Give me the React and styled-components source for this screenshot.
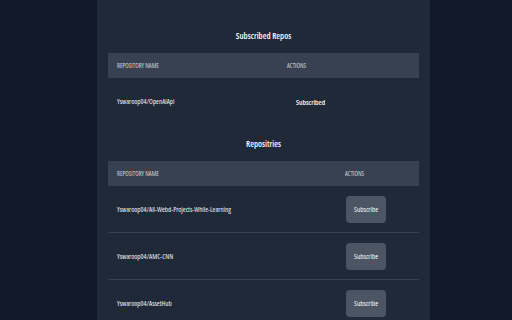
import React from "react";
import styled, { createGlobalStyle } from "styled-components";

const Global = createGlobalStyle`
  html, body { margin: 0; padding: 0; background: #111827; }
  body { font-family: "Open Sans", "Liberation Sans", Arial, sans-serif; font-stretch: 75%; }
`;

const Page = styled.div`
  height: 320px;
  overflow: hidden;
  display: flex;
  padding-left: 97px;
`;

const Panel = styled.main`
  width: 333px;
  min-height: 100%;
  background: #1f2937;
  box-sizing: border-box;
  padding: 30px 11px 0;
  display: flex;
  flex-direction: column;
  gap: 13px;
`;

const Section = styled.section`
  display: flex;
  flex-direction: column;
`;

const Title = styled.h2`
  margin: 0 0 11px;
  height: 12px;
  line-height: 12px;
  font-size: 8.6px;
  font-weight: 600;
  color: #f9fafb;
  text-align: center;
`;

const Row = styled.div`
  display: grid;
  grid-template-columns: ${(p) => p.$cols};
  align-items: center;
  border-bottom: ${(p) => (p.$last ? "none" : "1px solid #374151")};
  height: ${(p) => (p.$head ? "25px" : "47px")};
  box-sizing: border-box;
  background: ${(p) => (p.$head ? "#374151" : "transparent")};
`;

const HeadCell = styled.div`
  padding-left: 9px;
  font-size: 6.4px;
  text-transform: uppercase;
  color: #d1d5db;
`;

const Cell = styled.div`
  padding-left: 9px;
  font-size: 7px;
  font-weight: 500;
  color: #f3f4f6;
`;

const ActionCell = styled.div`
  padding-left: 10px;
`;

const Button = styled.button`
  height: 27px;
  padding: 0 8px;
  border: none;
  border-radius: 4px;
  font-family: inherit;
  font-stretch: inherit;
  font-size: 7.2px;
  color: #f9fafb;
  background: ${(p) => (p.$subscribed ? "transparent" : "#4b5563")};
  font-weight: ${(p) => (p.$subscribed ? 600 : 500)};
  cursor: pointer;
`;

const subscribed = ["Yswaroop04/OpenAiApi"];
const repos = [
  "Yswaroop04/All-Webd-Projects-While-Learning",
  "Yswaroop04/AMC-CNN",
  "Yswaroop04/AssetHub",
];

function Table({ cols, items, label, isSub }) {
  return (
    <div>
      <Row $head $cols={cols}>
        <HeadCell>Repository Name</HeadCell>
        <HeadCell>Actions</HeadCell>
      </Row>
      {items.map((name, i) => (
        <Row key={name} $cols={cols} $last={isSub && i === items.length - 1}>
          <Cell>{name}</Cell>
          <ActionCell>
            <Button $subscribed={isSub}>{label}</Button>
          </ActionCell>
        </Row>
      ))}
    </div>
  );
}

export default function App() {
  return (
    <>
      <Global />
      <Page>
        <Panel>
          <Section>
            <Title>Subscribed Repos</Title>
            <Table cols="170px 1fr" items={subscribed} label="Subscribed" isSub />
          </Section>
          <Section>
            <Title>Repositries</Title>
            <Table cols="228px 1fr" items={repos} label="Subscribe" />
          </Section>
        </Panel>
      </Page>
    </>
  );
}
